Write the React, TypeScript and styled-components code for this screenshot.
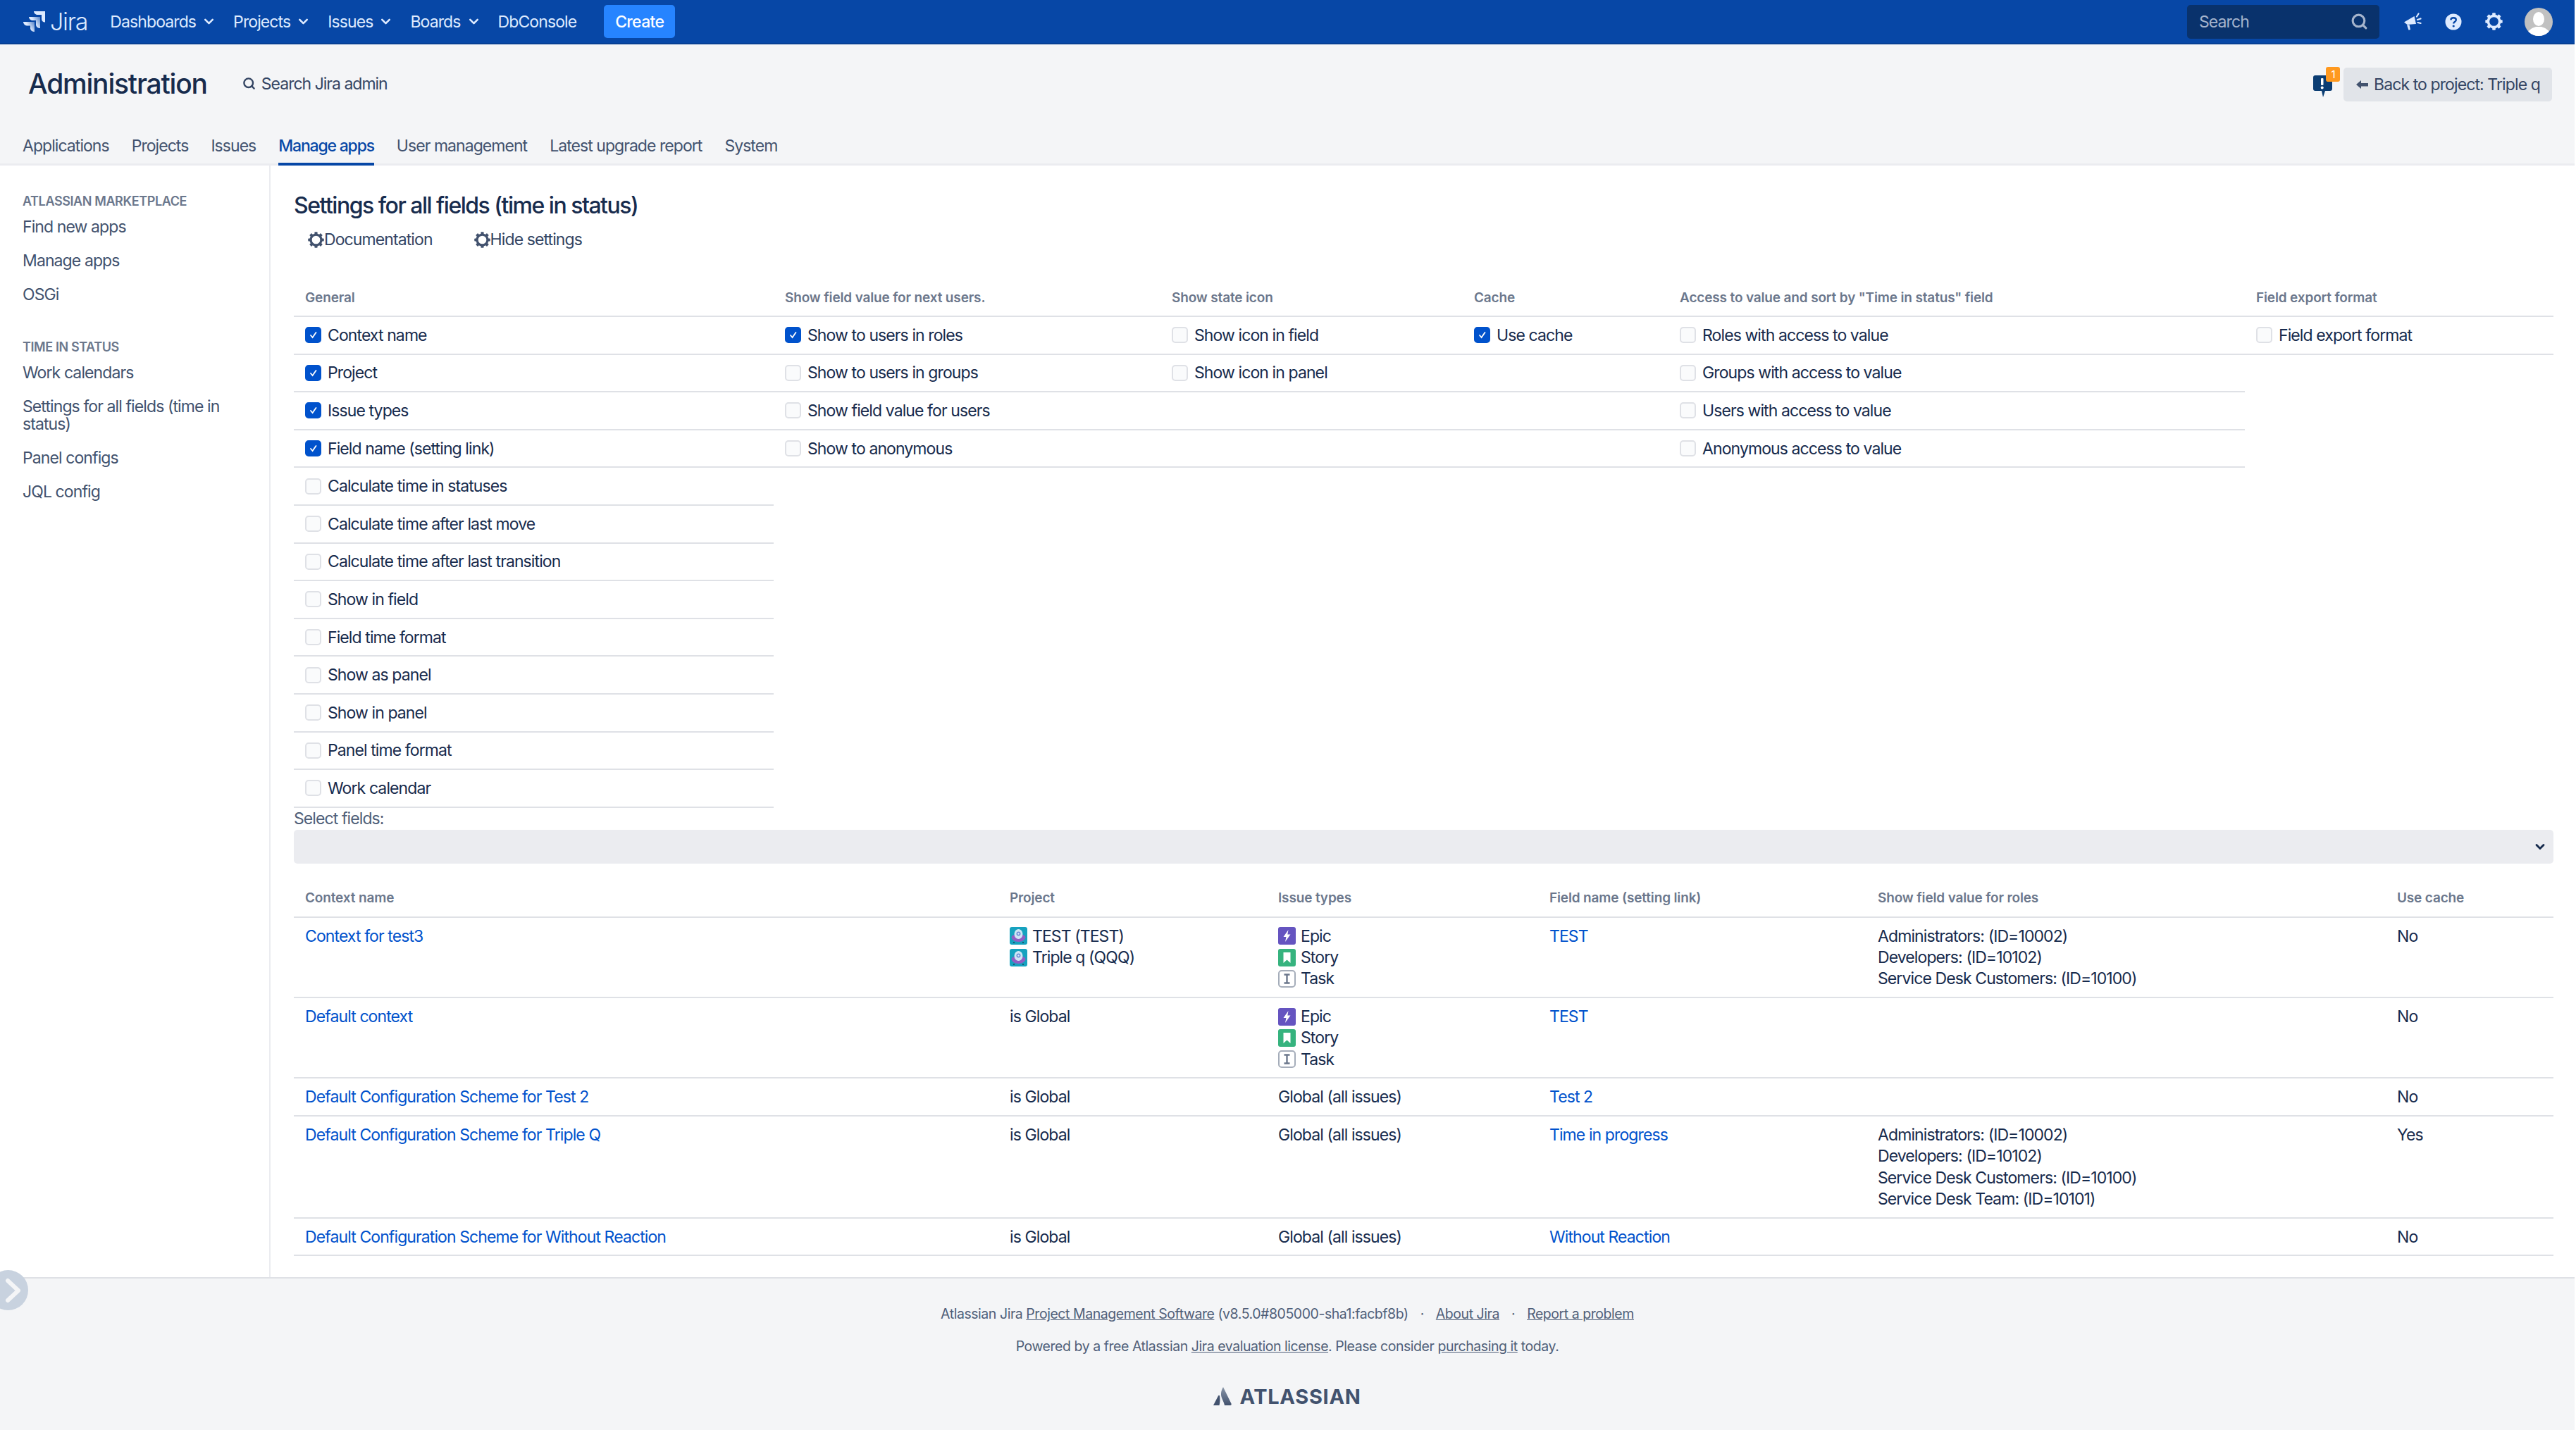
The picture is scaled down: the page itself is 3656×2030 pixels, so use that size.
import React from "react";
import styled, { createGlobalStyle } from "styled-components";
import { ChevronDown, Search } from "lucide-react";

const GlobalStyle = createGlobalStyle`
  html, body {
    margin: 0;
    padding: 0;
    background: #fff;
    font-family: Inter, "Liberation Sans", sans-serif;
    font-size: 23px;
    letter-spacing: -0.9px;
    color: #172b4d;
  }
  * { box-sizing: border-box; }
`;

const Page = styled.div`
  width: 3654px;
  min-height: 2030px;
  display: flex;
  flex-direction: column;
`;

const TopBar = styled.header`
  height: 63px;
  background: #0747a6;
  border-bottom: 2px solid #063f94;
  display: flex;
  align-items: center;
  padding: 0 31px 0 33px;
  color: #deebff;
`;

const Logo = styled.div`
  display: flex;
  align-items: center;
  gap: 7px;
  margin-right: 32px;
`;

const LogoText = styled.span`
  font-size: 34px;
  font-weight: 300;
  line-height: 40px;
  letter-spacing: -1.2px;
  color: #deebff;
`;

const NavItem = styled.span`
  display: flex;
  align-items: center;
  gap: 8px;
  margin-right: 24px;
`;

const CreateButton = styled.button`
  height: 47px;
  width: 101px;
  margin-left: 15px;
  background: #2684ff;
  border: none;
  border-radius: 5px;
  color: #fff;
  font: 500 23px Inter, sans-serif;
  letter-spacing: -0.7px;
`;

const TopRight = styled.div`
  margin-left: auto;
  display: flex;
  align-items: center;
`;

const SearchBox = styled.div`
  width: 273px;
  height: 48px;
  background: #09326c;
  border-radius: 5px;
  display: flex;
  align-items: center;
  justify-content: space-between;
  padding: 0 16px 0 17px;
  color: #a5b4cc;
  margin-right: 34px;
`;

const TopIcon = styled.span`
  display: flex;
  margin-right: 33px;
`;

const AvatarBox = styled.span`
  width: 40px;
  height: 40px;
  margin-left: -2px;
  border-radius: 50%;
  overflow: hidden;
  display: flex;
`;

const AdminHeader = styled.div`
  background: #f4f5f7;
  border-bottom: 3px solid #ebecf0;
`;

const TitleRow = styled.div`
  height: 114px;
  display: flex;
  align-items: center;
  padding: 0 32px 0 40px;
`;

const Title = styled.h1`
  margin: 0 50px 3px 0;
  font-size: 39px;
  font-weight: 500;
  letter-spacing: -1.2px;
`;

const AdminSearch = styled.span`
  display: flex;
  align-items: center;
  gap: 8px;
  margin-bottom: 3px;
  color: #344563;
  letter-spacing: -1px;
`;

const TitleActions = styled.div`
  margin-left: auto;
  display: flex;
  align-items: center;
  gap: 16px;
`;

const FlagWrap = styled.div`
  position: relative;
  width: 27px;
  height: 28px;
`;

const FlagBadge = styled.span`
  position: absolute;
  top: -11px;
  left: 18px;
  width: 20px;
  height: 21px;
  border-radius: 3px;
  background: #ff991f;
  color: #fff;
  font-size: 15px;
  line-height: 21px;
  text-align: center;
`;

const BackButton = styled.button`
  height: 48px;
  width: 296px;
  border: none;
  border-radius: 5px;
  background: #e1e4e9;
  color: #344563;
  font: 400 23px Inter, sans-serif;
  letter-spacing: -0.9px;
  display: flex;
  align-items: center;
  gap: 8px;
  padding: 0 0 0 18px;
  white-space: nowrap;
`;

const Tabs = styled.nav`
  display: flex;
  gap: 32px;
  height: 55px;
  padding: 0 0 0 32px;
`;

const Tab = styled.a<{ $active?: boolean }>`
  position: relative;
  line-height: 60px;
  letter-spacing: ${({ $active }) => ($active ? "-1.2px" : "-0.95px")};
  color: ${({ $active }) => ($active ? "#0747a6" : "#42526e")};
  font-weight: ${({ $active }) => ($active ? 500 : 400)};

  &::after {
    content: "";
    display: ${({ $active }) => ($active ? "block" : "none")};
    position: absolute;
    left: 0;
    right: 0;
    bottom: -3px;
    height: 4px;
    background: #0747a6;
  }
`;

const Body = styled.div`
  flex: 1;
  display: flex;
`;

const Sidebar = styled.aside`
  width: 384px;
  flex: none;
  border-right: 2px solid #ebecf0;
  padding: 39px 20px 0 32px;
`;

const SideHeading = styled.h3<{ $spaced?: boolean }>`
  margin: ${({ $spaced }) => ($spaced ? "39px" : "0")} 0 0;
  font-size: 18px;
  line-height: 24px;
  font-weight: 600;
  color: #6b778c;
  letter-spacing: -0.4px;
  text-transform: uppercase;
`;

const SideLink = styled.a`
  display: block;
  padding: 11.5px 0;
  line-height: 25px;
  color: #42526e;
`;

const Content = styled.main`
  flex: 1;
  padding: 37px 30px 27px 33px;
  min-width: 0;
`;

const Heading = styled.h2`
  margin: 0 0 8px;
  font-size: 32px;
  line-height: 40px;
  font-weight: 500;
  letter-spacing: -1.5px;
`;

const HelpLinks = styled.div`
  display: flex;
  gap: 59px;
  padding-left: 20px;
  height: 40px;
`;

const HelpLink = styled.a`
  display: flex;
  align-items: center;
  color: #344563;
`;

const SettingsColumns = styled.div`
  display: flex;
  margin-top: 38px;
`;

const SettingsColumn = styled.div<{ $width: number }>`
  width: ${({ $width }) => $width}px;
  flex: none;
`;

const ColumnTitle = styled.div`
  height: 52px;
  padding: 13px 16px 0;
  line-height: 24px;
  font-size: 19px;
  font-weight: 600;
  color: #6b778c;
  letter-spacing: -0.15px;
  border-bottom: 2px solid #dfe1e6;
  white-space: nowrap;
`;

const CheckRow = styled.label`
  height: 53.6px;
  display: flex;
  align-items: center;
  gap: 9px;
  padding-left: 16px;
  border-bottom: 2px solid #dfe1e6;
`;

const CheckBox = styled.span<{ $checked: boolean }>`
  width: 23px;
  height: 23px;
  flex: none;
  border-radius: 5px;
  display: flex;
  align-items: center;
  justify-content: center;
  background: ${({ $checked }) => ($checked ? "#0052cc" : "#fafbfc")};
  border: 2px solid ${({ $checked }) => ($checked ? "#0052cc" : "#dfe1e6")};
`;

const SelectLabel = styled.div`
  height: 31px;
  line-height: 31px;
  color: #505f79;
`;

const SelectBox = styled.div`
  height: 48px;
  background: #ebecf0;
  border-radius: 5px;
  display: flex;
  align-items: center;
  justify-content: flex-end;
  padding-right: 9px;
`;

const ContextTable = styled.div`
  margin-top: 23px;
`;

const GRID = "1000px 381px 385px 466px 737px 237px";

const HeadRow = styled.div`
  display: grid;
  grid-template-columns: ${GRID};
  height: 54px;
  align-items: center;
  border-bottom: 2px solid #dfe1e6;
  font-size: 19px;
  font-weight: 600;
  color: #6b778c;
  letter-spacing: -0.15px;
`;

const HeadCell = styled.div`
  padding: 0 16px;
`;

const BodyRow = styled.div`
  display: grid;
  grid-template-columns: ${GRID};
  padding: 11px 0 10.4px;
  border-bottom: 2px solid #dfe1e6;
  line-height: 30.3px;
`;

const BodyCell = styled.div`
  padding: 0 16px;
`;

const ContextLink = styled.a`
  color: #0052cc;
`;

const IconLine = styled.div`
  display: flex;
  align-items: center;
  gap: 7px;
  height: 30.3px;
`;

const Footer = styled.footer`
  background: #f4f5f7;
  border-top: 2px solid #dfe1e6;
  height: 217px;
  padding-top: 35px;
  display: flex;
  flex-direction: column;
  align-items: center;
  position: relative;
  font-size: 19.5px;
  color: #505f79;
  letter-spacing: -0.45px;
`;

const FooterLine = styled.div`
  line-height: 30px;
  margin-bottom: 16px;
`;

const FooterLink = styled.a`
  text-decoration: underline;
`;

const Dot = styled.span`
  margin: 0 17px;
`;

const BrandRow = styled.div`
  display: flex;
  align-items: center;
  gap: 11px;
  margin-top: 20px;
  height: 40px;
`;

const BrandText = styled.span`
  font-size: 29px;
  font-weight: 700;
  color: #42526e;
  letter-spacing: 0.7px;
`;

const ExpandHandle = styled.div`
  position: absolute;
  top: -12px;
  left: -17px;
  width: 57px;
  height: 57px;
  border-radius: 50%;
  background: #c8d2df;
  display: flex;
  align-items: center;
  justify-content: flex-end;
  padding-right: 8px;
`;

const JiraMark = () => (
  <svg width="31" height="29" viewBox="0 0 31 29">
    <defs>
      <linearGradient id="jg" x1="1" y1="0" x2="0" y2="0.6">
        <stop offset="0" stopColor="#deebff" stopOpacity="0.35" />
        <stop offset="0.6" stopColor="#deebff" />
      </linearGradient>
    </defs>
    <path d="M15 0h16v15.500c-3 0-5-2-5-5V5h-6c-2.500 0-5-2.500-5-5z" fill="#deebff" />
    <path d="M8 8h16v16c-3 0-6-2-6-5v-6h-5c-2.500 0-5-2.500-5-5z" fill="url(#jg)" />
    <path d="M0 15h16v14c-3 0-6-2-6-5v-3.500H5c-2.500 0-5-3-5-5.500z" fill="url(#jg)" />
  </svg>
);

const Megaphone = () => (
  <svg width="26" height="26" viewBox="0 0 26 26" fill="#deebff">
    <path d="M1 13.500 15.500 5l2.500 11-12.500 1z" />
    <path d="M5 17.500l3.500-.3L10 24l-2.500.7z" />
    <path d="M19 5.500 21.500 1.500 M20 10l4.500-1.500 M20.500 14l4 1" stroke="#deebff" strokeWidth="2.200" strokeLinecap="round" />
  </svg>
);

const HelpIcon = () => (
  <svg width="24" height="24" viewBox="0 0 24 24">
    <circle cx="12" cy="12" r="11.500" fill="#deebff" />
    <path d="M8.300 9.300c.2-2 1.700-3.100 3.800-3.100 2.200 0 3.700 1.200 3.700 3 0 1.500-.9 2.200-1.900 2.900-1 .7-1.700 1.200-1.700 2.400" fill="none" stroke="#0747a6" strokeWidth="2.400" />
    <circle cx="12.200" cy="18" r="1.600" fill="#0747a6" />
  </svg>
);

// ring with eight chunky teeth, same drawing in the top bar and the help links
const GearIcon = ({ size, color }: { size: number; color: string }) => (
  <svg width={size} height={size} viewBox="0 0 24 24">
    <circle cx="12" cy="12" r="7.800" fill="none" stroke={color} strokeWidth="3.400" />
    {[0, 45, 90, 135, 180, 225, 270, 315].map((deg) => (
      <rect key={deg} x="9.800" y="0.300" width="4.400" height="4" rx="0.800" fill={color} transform={`rotate(${deg} 12 12)`} />
    ))}
  </svg>
);

const UserAvatar = () => (
  <svg width="40" height="40" viewBox="0 0 40 40">
    <rect width="40" height="40" fill="#c1c1c1" />
    <ellipse cx="20" cy="16" rx="8" ry="10" fill="#fff" />
    <path d="M3 40c1-9 8-11 13-13h8c5 2 12 4 13 13z" fill="#fff" />
  </svg>
);

const FlagIcon = () => (
  <svg width="27" height="34" viewBox="0 0 27 34">
    <path d="M3 1h21a3 3 0 0 1 3 3v16a3 3 0 0 1-3 3h-7l-3 9-2-9H3a3 3 0 0 1-3-3V4a3 3 0 0 1 3-3z" fill="#0b3d73" />
    <rect x="11" y="5" width="3.500" height="10" rx="1" fill="#fff" />
    <circle cx="12.700" cy="18.500" r="2" fill="#fff" />
  </svg>
);

const BackArrow = () => (
  <svg width="17" height="14" viewBox="0 0 17 14" fill="#42526e">
    <path d="M0 7 7 1v4h10v4.500H7V13z" />
  </svg>
);

const CheckMark = () => (
  <svg width="13" height="13" viewBox="0 0 13 13">
    <path d="M3 7l2.600 3L10.500 3" fill="none" stroke="#fff" strokeWidth="1.800" strokeLinecap="round" />
  </svg>
);

const ProjectIcon = () => (
  <svg width="25" height="25" viewBox="0 0 25 25">
    <rect width="25" height="25" rx="3" fill="#16a2bf" />
    <path d="M2.500 14c1-2.500 4-3.500 10-3.500s9 1 10 3.500c0 3.500-4 7-10 7s-10-3.500-10-7z" fill="#8f5fc4" />
    <path d="M6 21v2M19 21v2" stroke="#253858" strokeWidth="1.500" />
    <ellipse cx="12.500" cy="10" rx="6" ry="7" fill="#cfe6f5" />
    <circle cx="12.500" cy="9.500" r="3" fill="#6f8fd6" />
    <circle cx="12.500" cy="9.500" r="1.200" fill="#deebff" />
  </svg>
);

const IssueIcon = ({ kind }: { kind: string }) => {
  if (kind === "Epic") {
    return (
      <svg width="25" height="25" viewBox="0 0 25 25">
        <rect width="25" height="25" rx="3" fill="#6554c0" />
        <path d="M14.500 4 7.500 14h4l-1.500 7 7.500-10.500h-4.200z" fill="#fff" />
      </svg>
    );
  }
  if (kind === "Story") {
    return (
      <svg width="25" height="25" viewBox="0 0 25 25">
        <rect width="25" height="25" rx="3" fill="#36b37e" />
        <path d="M7.500 5h10v15l-5-4.500-5 4.500z" fill="#fff" />
      </svg>
    );
  }
  return (
    <svg width="25" height="25" viewBox="0 0 25 25">
      <rect x="1" y="1" width="23" height="23" rx="4" fill="#fff" stroke="#a5adba" strokeWidth="2" />
      <path d="M8.500 6.500h8M8.500 18.500h8M12.500 6.500v12" stroke="#6b778c" strokeWidth="2.400" fill="none" />
    </svg>
  );
};

const AtlassianMark = () => (
  <svg width="26" height="26" viewBox="0 0 26 26">
    <defs>
      <linearGradient id="ag" x1="0" y1="0" x2="0" y2="1">
        <stop offset="0" stopColor="#8a96a8" />
        <stop offset="1" stopColor="#42526e" />
      </linearGradient>
    </defs>
    <path d="M0 26 7 12.500c.7-1 1.500-.9 2 0 .8 4.500.5 9-.5 13.500z" fill="#42526e" />
    <path d="M14 0l11.500 23.500c.5 1.300 0 2.500-1.500 2.500h-8c-1.500-7-5.500-11-5-17 .2-3.500 1.500-6.500 3-9z" fill="url(#ag)" />
  </svg>
);

const columns = [
  {
    title: "General",
    width: 681,
    rows: 13,
    items: [
      ["Context name", true],
      ["Project", true],
      ["Issue types", true],
      ["Field name (setting link)", true],
      ["Calculate time in statuses", false],
      ["Calculate time after last move", false],
      ["Calculate time after last transition", false],
      ["Show in field", false],
      ["Field time format", false],
      ["Show as panel", false],
      ["Show in panel", false],
      ["Panel time format", false],
      ["Work calendar", false],
    ],
  },
  {
    title: "Show field value for next users.",
    width: 549,
    rows: 4,
    items: [
      ["Show to users in roles", true],
      ["Show to users in groups", false],
      ["Show field value for users", false],
      ["Show to anonymous", false],
    ],
  },
  {
    title: "Show state icon",
    width: 429,
    rows: 4,
    items: [
      ["Show icon in field", false],
      ["Show icon in panel", false],
    ],
  },
  { title: "Cache", width: 292, rows: 4, items: [["Use cache", true]] },
  {
    title: 'Access to value and sort by "Time in status" field',
    width: 818,
    rows: 4,
    items: [
      ["Roles with access to value", false],
      ["Groups with access to value", false],
      ["Users with access to value", false],
      ["Anonymous access to value", false],
    ],
  },
  { title: "Field export format", width: 438, rows: 1, items: [["Field export format", false]] },
] as { title: string; width: number; rows: number; items: [string, boolean][] }[];

const ISSUE_TYPES = ["Epic", "Story", "Task"];

const contexts = [
  {
    name: "Context for test3",
    projects: ["TEST (TEST)", "Triple q (QQQ)"],
    issues: ISSUE_TYPES,
    field: "TEST",
    roles: ["Administrators: (ID=10002)", "Developers: (ID=10102)", "Service Desk Customers: (ID=10100)"],
    cache: "No",
  },
  { name: "Default context", projects: [], issues: ISSUE_TYPES, field: "TEST", roles: [], cache: "No" },
  { name: "Default Configuration Scheme for Test 2", projects: [], issues: [], field: "Test 2", roles: [], cache: "No" },
  {
    name: "Default Configuration Scheme for Triple Q",
    projects: [],
    issues: [],
    field: "Time in progress",
    roles: [
      "Administrators: (ID=10002)",
      "Developers: (ID=10102)",
      "Service Desk Customers: (ID=10100)",
      "Service Desk Team: (ID=10101)",
    ],
    cache: "Yes",
  },
  { name: "Default Configuration Scheme for Without Reaction", projects: [], issues: [], field: "Without Reaction", roles: [], cache: "No" },
];

export default function App() {
  return (
    <Page>
      <GlobalStyle />
      <TopBar>
        <Logo>
          <JiraMark />
          <LogoText>Jira</LogoText>
        </Logo>
        {["Dashboards", "Projects", "Issues", "Boards"].map((item) => (
          <NavItem key={item}>
            {item} <ChevronDown size={21} strokeWidth={3} />
          </NavItem>
        ))}
        <NavItem>DbConsole</NavItem>
        <CreateButton>Create</CreateButton>
        <TopRight>
          <SearchBox>
            Search
            <Search size={25} strokeWidth={3} color="#a5b4cc" />
          </SearchBox>
          <TopIcon>
            <Megaphone />
          </TopIcon>
          <TopIcon>
            <HelpIcon />
          </TopIcon>
          <TopIcon>
            <GearIcon size={25} color="#deebff" />
          </TopIcon>
          <AvatarBox>
            <UserAvatar />
          </AvatarBox>
        </TopRight>
      </TopBar>

      <AdminHeader>
        <TitleRow>
          <Title>Administration</Title>
          <AdminSearch>
            <Search size={19} strokeWidth={3} color="#344563" />
            Search Jira admin
          </AdminSearch>
          <TitleActions>
            <FlagWrap>
              <FlagIcon />
              <FlagBadge>1</FlagBadge>
            </FlagWrap>
            <BackButton>
              <BackArrow />
              Back to project: Triple q
            </BackButton>
          </TitleActions>
        </TitleRow>
        <Tabs>
          <Tab>Applications</Tab>
          <Tab>Projects</Tab>
          <Tab>Issues</Tab>
          <Tab $active>Manage apps</Tab>
          <Tab>User management</Tab>
          <Tab>Latest upgrade report</Tab>
          <Tab>System</Tab>
        </Tabs>
      </AdminHeader>

      <Body>
        <Sidebar>
          <SideHeading>Atlassian Marketplace</SideHeading>
          <SideLink>Find new apps</SideLink>
          <SideLink>Manage apps</SideLink>
          <SideLink>OSGi</SideLink>
          <SideHeading $spaced>Time in status</SideHeading>
          <SideLink>Work calendars</SideLink>
          <SideLink>Settings for all fields (time in status)</SideLink>
          <SideLink>Panel configs</SideLink>
          <SideLink>JQL config</SideLink>
        </Sidebar>

        <Content>
          <Heading>Settings for all fields (time in status)</Heading>
          <HelpLinks>
            <HelpLink>
              <GearIcon size={23} color="#42526e" />
              Documentation
            </HelpLink>
            <HelpLink>
              <GearIcon size={23} color="#42526e" />
              Hide settings
            </HelpLink>
          </HelpLinks>

          <SettingsColumns>
            {columns.map((col) => (
              <SettingsColumn key={col.title} $width={col.width}>
                <ColumnTitle>{col.title}</ColumnTitle>
                {Array.from({ length: col.rows }, (_, i) => {
                  const item = col.items[i];
                  return (
                    <CheckRow key={i}>
                      {item && <CheckBox $checked={item[1]}>{item[1] && <CheckMark />}</CheckBox>}
                      {item && item[0]}
                    </CheckRow>
                  );
                })}
              </SettingsColumn>
            ))}
          </SettingsColumns>

          <SelectLabel>Select fields:</SelectLabel>
          <SelectBox>
            <ChevronDown size={20} strokeWidth={3.5} color="#172b4d" />
          </SelectBox>

          <ContextTable>
            <HeadRow>
              <HeadCell>Context name</HeadCell>
              <HeadCell>Project</HeadCell>
              <HeadCell>Issue types</HeadCell>
              <HeadCell>Field name (setting link)</HeadCell>
              <HeadCell>Show field value for roles</HeadCell>
              <HeadCell>Use cache</HeadCell>
            </HeadRow>
            {contexts.map((ctx) => (
              <BodyRow key={ctx.name}>
                <BodyCell>
                  <ContextLink>{ctx.name}</ContextLink>
                </BodyCell>
                <BodyCell>
                  {ctx.projects.length === 0
                    ? "is Global"
                    : ctx.projects.map((p) => (
                        <IconLine key={p}>
                          <ProjectIcon />
                          {p}
                        </IconLine>
                      ))}
                </BodyCell>
                <BodyCell>
                  {ctx.issues.length === 0
                    ? "Global (all issues)"
                    : ctx.issues.map((t) => (
                        <IconLine key={t}>
                          <IssueIcon kind={t} />
                          {t}
                        </IconLine>
                      ))}
                </BodyCell>
                <BodyCell>
                  <ContextLink>{ctx.field}</ContextLink>
                </BodyCell>
                <BodyCell>
                  {ctx.roles.map((r) => (
                    <div key={r}>{r}</div>
                  ))}
                </BodyCell>
                <BodyCell>{ctx.cache}</BodyCell>
              </BodyRow>
            ))}
          </ContextTable>
        </Content>
      </Body>

      <Footer>
        <ExpandHandle>
          <svg width="26" height="36" viewBox="0 0 26 36">
            <path d="M5 4l15 14L5 32" fill="none" stroke="#f4f5f7" strokeWidth="6" strokeLinecap="round" strokeLinejoin="round" />
          </svg>
        </ExpandHandle>
        <FooterLine>
          Atlassian Jira <FooterLink>Project Management Software</FooterLink> (v8.5.0#805000-sha1:facbf8b)
          <Dot>·</Dot>
          <FooterLink>About Jira</FooterLink>
          <Dot>·</Dot>
          <FooterLink>Report a problem</FooterLink>
        </FooterLine>
        <FooterLine>
          Powered by a free Atlassian <FooterLink>Jira evaluation license</FooterLink>. Please consider{" "}
          <FooterLink>purchasing it</FooterLink> today.
        </FooterLine>
        <BrandRow>
          <AtlassianMark />
          <BrandText>ATLASSIAN</BrandText>
        </BrandRow>
      </Footer>
    </Page>
  );
}
